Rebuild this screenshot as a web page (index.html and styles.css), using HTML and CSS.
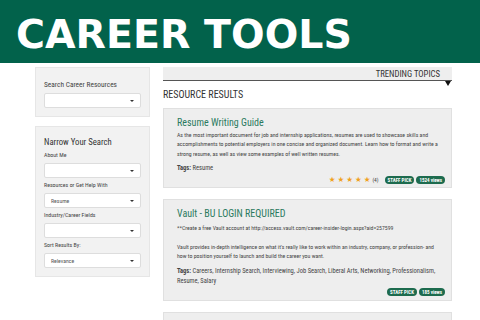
FILE: index.html
```html
<!DOCTYPE html>
<html lang="en">
<head>
    <meta charset="UTF-8">
    <title>Career Tools</title>
    <link rel="stylesheet" href="styles.css">
</head>
<body>
    <header class="banner">
        <h1>CAREER TOOLS</h1>
    </header>

    <div class="page">
        <aside class="sidebar">
            <div class="panel panel-search">
                <div class="panel-label">Search Career Resources</div>
                <div class="select"><span class="select-value"></span><span class="caret"></span></div>
            </div>

            <div class="panel panel-filter">
                <h2>Narrow Your Search</h2>

                <div class="field-label">About Me</div>
                <div class="select"><span class="select-value"></span><span class="caret"></span></div>

                <div class="field-label">Resources or Get Help With</div>
                <div class="select"><span class="select-value">Resume</span><span class="caret"></span></div>

                <div class="field-label">Industry/Career Fields</div>
                <div class="select"><span class="select-value"></span><span class="caret"></span></div>

                <div class="field-label">Sort Results By:</div>
                <div class="select"><span class="select-value">Relevance</span><span class="caret"></span></div>
            </div>
        </aside>

        <main class="results">
            <div class="trending">
                <div class="trending-bar">TRENDING TOPICS</div>
                <span class="trending-caret"></span>
            </div>

            <h2 class="results-title">RESOURCE RESULTS</h2>

            <article class="card">
                <h3 class="card-title">Resume Writing Guide</h3>
                <p class="card-text">As the most important document for job and internship applications, resumes are used to showcase skills and accomplishments to potential employers in one concise and organized document. Learn how to format and write a strong resume, as well as view some examples of well written resumes.</p>
                <div class="card-tags"><b>Tags:</b> Resume</div>
                <div class="card-meta">
                    <span class="stars">★★★★★</span><span class="count">(4)</span>
                    <span class="badge">STAFF PICK</span>
                    <span class="badge">1524 views</span>
                </div>
            </article>

            <article class="card">
                <h3 class="card-title">Vault - BU LOGIN REQUIRED</h3>
                <p class="card-text card-note">**Create a free Vault account at http://access.vault.com/career-insider-login.aspx?aid=257599</p>
                <p class="card-text card-para">Vault provides in-depth intelligence on what it's really like to work within an industry, company, or profession- and how to position yourself to launch and build the career you want.</p>
                <div class="card-tags"><b>Tags:</b> Careers, Internship Search, Interviewing, Job Search, Liberal Arts, Networking, Professionalism, Resume, Salary</div>
                <div class="card-meta">
                    <span class="badge">STAFF PICK</span>
                    <span class="badge">185 views</span>
                </div>
            </article>

            <article class="card card-empty"></article>
        </main>
    </div>
</body>
</html>
```

FILE: styles.css
```css
* {
    margin: 0;
    padding: 0;
    box-sizing: border-box;
}

html, body {
    overflow: hidden;
}

body {
    font-family: 'Roboto Condensed', 'Liberation Sans', Arial, sans-serif;
    background: #fff;
    color: #333;
}

.banner {
    background: #02624b;
    height: 63px;
    padding: 4px 0 0 16px;
    display: flex;
    align-items: center;
}

.banner h1 {
    font-family: 'DejaVu Sans', sans-serif;
    font-weight: bold;
    font-size: 39.5px;
    line-height: 40px;
    color: #fff;
}

.page {
    display: grid;
    grid-template-columns: 115px 289px;
    column-gap: 13px;
    padding: 4px 0 0 35px;
    align-items: start;
}

/* sidebar */

.panel {
    background: #f2f2f2;
    border: 1px solid #e6e6e6;
    padding: 10px 8px 8px;
}

.panel-label {
    font-size: 7.4px;
    line-height: 13px;
    margin-bottom: 2px;
    color: #444;
}

.panel-filter {
    margin-top: 9px;
    padding-top: 9px;
}

.panel-filter h2 {
    font-size: 8.7px;
    font-weight: normal;
    line-height: 13px;
    color: #333;
}

.field-label {
    font-size: 5.9px;
    line-height: 11px;
    margin: 2px 0;
    color: #444;
}

.panel-filter h2 + .field-label {
    margin-top: 1px;
}

.select {
    background: #fff;
    border: 1px solid #ddd;
    border-radius: 2px;
    height: 15px;
    display: flex;
    align-items: center;
    justify-content: space-between;
    padding: 0 6px;
}

.select-value {
    font-size: 5.8px;
    color: #555;
}

.caret {
    width: 0;
    height: 0;
    border-left: 2px solid transparent;
    border-right: 2px solid transparent;
    border-top: 2px solid #333;
}

/* results */

.trending {
    display: flex;
    flex-direction: column;
}

.trending-bar {
    background: #eeeeee;
    height: 14px;
    border-bottom: 1px solid #555;
    text-align: right;
    padding-right: 12px;
    font-size: 8.7px;
    line-height: 15px;
    color: #333;
}

.trending-caret {
    align-self: flex-end;
    margin-right: 1px;
    width: 0;
    height: 0;
    border-left: 3px solid transparent;
    border-right: 3px solid transparent;
    border-top: 5px solid #111;
}

.results-title {
    font-size: 10px;
    font-weight: normal;
    line-height: 14px;
    margin: 2px 0 6px;
    color: #333;
}

.card {
    background: #eeeeee;
    border: 1px solid #e0e0e0;
    padding: 6px 10px 3px 13px;
    margin-bottom: 11px;
}

.card-title {
    font-size: 10px;
    font-weight: normal;
    line-height: 16px;
    color: #2b7a5e;
}

.card-text {
    font-size: 5.8px;
    line-height: 9.4px;
    color: #444;
}

.card-note {
    margin-top: 2px;
}

.card-para {
    margin-top: 9.4px;
}

.card-tags {
    font-size: 6.5px;
    line-height: 10px;
    margin-top: 4px;
    color: #444;
}

.card-meta {
    display: flex;
    justify-content: flex-end;
    align-items: center;
    gap: 2px;
    margin: 2px -4px 0 0;
    height: 9px;
}

.stars {
    font-family: 'DejaVu Sans', sans-serif;
    font-size: 7.5px;
    letter-spacing: 2px;
    color: #f0a11e;
}

.count {
    font-size: 5.5px;
    color: #444;
    margin: 0 4px 0 -2px;
}

.badge {
    background: #1d6b4e;
    color: #fff;
    font-size: 5px;
    font-weight: bold;
    line-height: 8px;
    height: 8px;
    padding: 0 3px;
    border-radius: 5px;
}

.card-empty {
    height: 40px;
}
```
